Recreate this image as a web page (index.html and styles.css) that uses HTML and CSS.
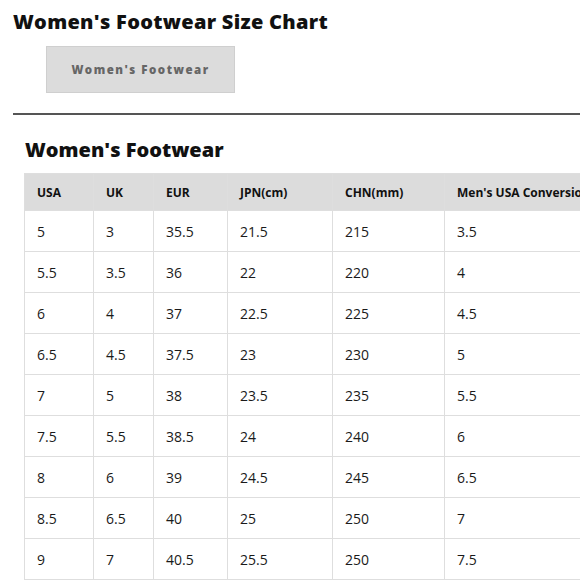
FILE: index.html
```html
<!DOCTYPE html>
<html>
<head>
<meta charset="utf-8">
<link rel="stylesheet" href="styles.css">
</head>
<body>
<div class="page">
  <h1 class="title">Women's Footwear Size Chart</h1>
  <div class="tabs">
    <div class="tab">Women's Footwear</div>
  </div>
  <hr class="rule">
  <section class="chart">
    <h2 class="subtitle">Women's Footwear</h2>
    <table class="sizes">
      <colgroup>
        <col class="c1"><col class="c2"><col class="c3"><col class="c4"><col class="c5"><col class="c6">
      </colgroup>
      <thead>
        <tr><th>USA</th><th>UK</th><th>EUR</th><th>JPN(cm)</th><th>CHN(mm)</th><th>Men's USA Conversion</th></tr>
      </thead>
      <tbody>
        <tr><td>5</td><td>3</td><td>35.5</td><td>21.5</td><td>215</td><td>3.5</td></tr>
        <tr><td>5.5</td><td>3.5</td><td>36</td><td>22</td><td>220</td><td>4</td></tr>
        <tr><td>6</td><td>4</td><td>37</td><td>22.5</td><td>225</td><td>4.5</td></tr>
        <tr><td>6.5</td><td>4.5</td><td>37.5</td><td>23</td><td>230</td><td>5</td></tr>
        <tr><td>7</td><td>5</td><td>38</td><td>23.5</td><td>235</td><td>5.5</td></tr>
        <tr><td>7.5</td><td>5.5</td><td>38.5</td><td>24</td><td>240</td><td>6</td></tr>
        <tr><td>8</td><td>6</td><td>39</td><td>24.5</td><td>245</td><td>6.5</td></tr>
        <tr><td>8.5</td><td>6.5</td><td>40</td><td>25</td><td>250</td><td>7</td></tr>
        <tr><td>9</td><td>7</td><td>40.5</td><td>25.5</td><td>250</td><td>7.5</td></tr>
      </tbody>
    </table>
  </section>
</div>
</body>
</html>
```
FILE: styles.css
```css
html, body {
  margin: 0;
  padding: 0;
  background: #fff;
  overflow: hidden;
}
.page {
  width: 567px;
  padding: 10px 0 0 13px;
  font-family: "Open Sans", "Liberation Sans", sans-serif;
  color: #111;
  overflow: hidden;
}
.title {
  margin: 0;
  font-size: 20px;
  line-height: 24px;
  font-weight: 800;
  letter-spacing: 0.3px;
}
.tabs {
  display: flex;
  padding: 12px 0 0 33px;
}
.tab {
  width: 187px;
  height: 45px;
  background: #dcdcdc;
  border: 1px solid #cfcfcf;
  color: #666;
  font-size: 11.5px;
  font-weight: 800;
  letter-spacing: 1.5px;
  display: flex;
  align-items: center;
  justify-content: center;
}
.rule {
  margin: 20px 0 0 0;
  border: 0;
  border-top: 2px solid #555;
  height: 0;
}
.chart {
  padding: 22px 0 0 11px;
}
.subtitle {
  margin: 0 0 10px 1px;
  font-size: 20px;
  line-height: 26px;
  font-weight: 800;
}
.sizes {
  border-collapse: collapse;
  table-layout: fixed;
  width: 570px;
}
.sizes th, .sizes td {
  text-align: left;
  padding: 0 0 0 12px;
  border: 1px solid #dedede;
  white-space: nowrap;
  overflow: hidden;
}
.sizes th {
  background: #dcdcdc;
  height: 36px;
  font-size: 12px;
  font-weight: 700;
  color: #111;
}
.sizes td {
  height: 40px;
  font-size: 14px;
  color: #1a1a1a;
}
.c1 { width: 69px; }
.c2 { width: 60px; }
.c3 { width: 74px; }
.c4 { width: 105px; }
.c5 { width: 112px; }
.c6 { width: 150px; }
```
